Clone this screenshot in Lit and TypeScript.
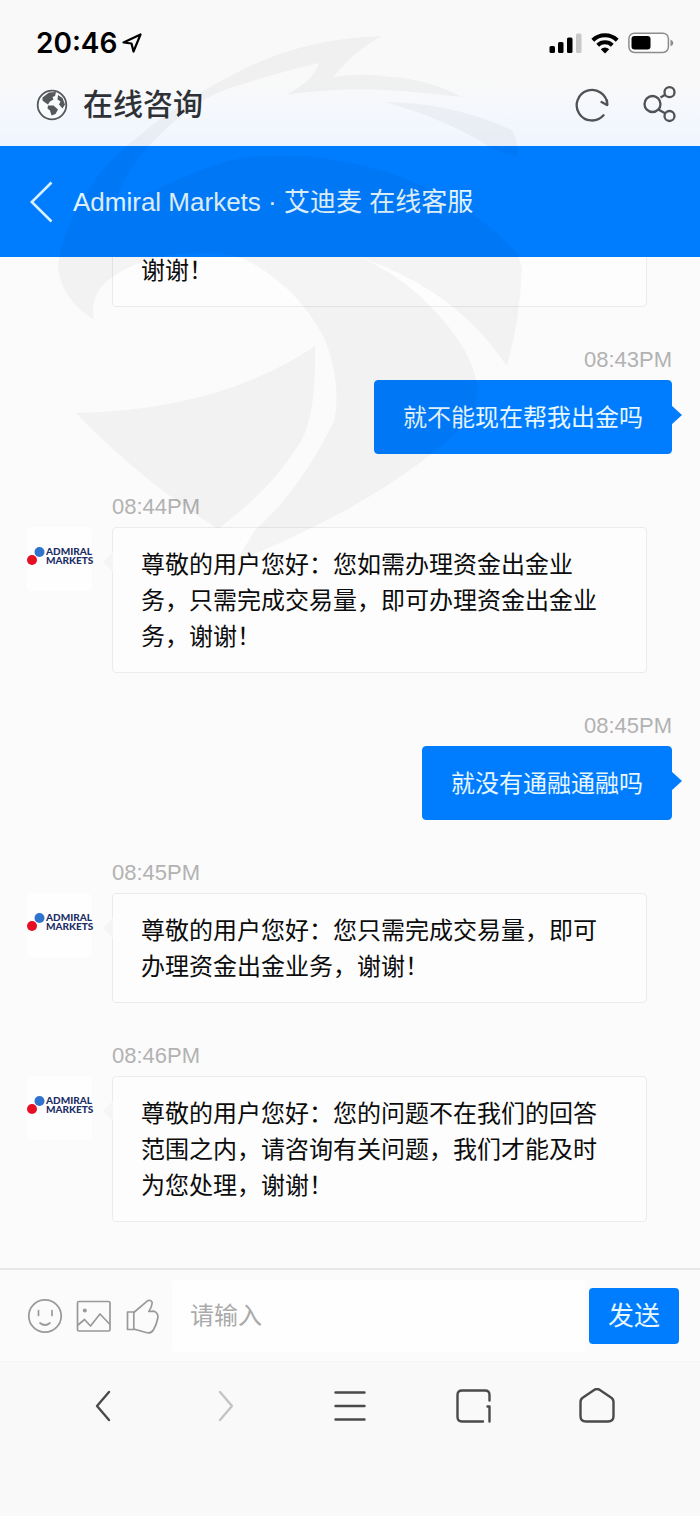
import { LitElement, html, css, svg } from "lit";
import { customElement, property } from "lit/decorators.js";

interface Message {
  from: "agent" | "me";
  time: string;
  text: string;
}

const MESSAGES: Message[] = [
  { from: "agent", time: "", text: "谢谢！" },
  { from: "me", time: "08:43PM", text: "就不能现在帮我出金吗" },
  {
    from: "agent",
    time: "08:44PM",
    text: "尊敬的用户您好：您如需办理资金出金业务，只需完成交易量，即可办理资金出金业务，谢谢！",
  },
  { from: "me", time: "08:45PM", text: "就没有通融通融吗" },
  {
    from: "agent",
    time: "08:45PM",
    text: "尊敬的用户您好：您只需完成交易量，即可办理资金出金业务，谢谢！",
  },
  {
    from: "agent",
    time: "08:46PM",
    text: "尊敬的用户您好：您的问题不在我们的回答范围之内，请咨询有关问题，我们才能及时为您处理，谢谢！",
  },
];

const icon = (w: number, h: number, body: unknown) =>
  html`<svg width=${w} height=${h} viewBox="0 0 ${w} ${h}" aria-hidden="true">${body}</svg>`;

const locationArrow = icon(22, 22, svg`
  <path d="M1.500 10.500 L18.500 2.500 L11.500 19.500 L9.500 11.500 Z" fill="none" stroke="#000" stroke-width="2.2" stroke-linejoin="round"/>`);

const signal = icon(33, 22, svg`
  <rect x="0.5" y="14" width="5.5" height="7" rx="1.5"/>
  <rect x="9" y="10" width="5.5" height="11" rx="1.5"/>
  <rect x="18" y="5.500" width="5.5" height="15.5" rx="1.5"/>
  <rect x="27" y="1.500" width="5.5" height="19.5" rx="1.5" fill="#c8c8c8"/>`);

const wifi = icon(28, 22, svg`
  <g fill="none" stroke="#000" stroke-width="4">
    <path d="M1.800 8.300 A17.500 17.500 0 0 1 26.200 8.300"/>
    <path d="M6.700 13.200 A10.600 10.600 0 0 1 21.300 13.200"/>
  </g>
  <path d="M14 21.500 L9.800 17.300 A6 6 0 0 1 18.200 17.300 Z"/>`);

const battery = icon(46, 22, svg`
  <rect x="0.9" y="1.2" width="39.5" height="19.3" rx="5.5" fill="#fdfdfd" stroke="#8c8c8c" stroke-width="1.5"/>
  <rect x="3.500" y="4" width="19" height="13.600" rx="3"/>
  <path d="M42.500 7.500 Q45.300 8.800 45.300 10.900 Q45.300 13 42.500 14.300 Z" fill="#8c8c8c"/>`);

const globe = icon(32, 32, svg`
  <circle cx="16" cy="16" r="14.3" fill="#fafbfd" stroke="#55585c" stroke-width="1.8"/>
  <g fill="#55585c">
    <path d="M6.500 8.500 L13 3.500 L20 3 L19 7 L16.500 8 L17.500 10.500 L14 12.500 L12 15.500 L9 13.500 L6.500 11.500 Z"/>
    <path d="M12 16.500 L17.500 16.500 L22 20.500 L19.500 25 L15.500 26.500 L14 21.500 L11.500 19.500 Z"/>
    <path d="M22 6 L26.500 9 L29 15.500 L26.500 19.500 L23 15.500 L24.500 12.500 L21.500 10.500 Z"/>
  </g>`);

const refresh = icon(34, 34, svg`
  <g fill="none" stroke="#505256" stroke-width="2.3" stroke-linecap="round" stroke-linejoin="round">
    <path d="M28.500 27.300 A15.300 15.300 0 1 1 32.300 16.700"/>
    <path d="M26.500 14 L32 17 V12.500"/>
  </g>`);

const share = icon(34, 38, svg`
  <g fill="none" stroke="#505256" stroke-width="2.3">
    <circle cx="9.500" cy="18" r="8"/>
    <circle cx="26.500" cy="6.200" r="5"/>
    <circle cx="26.500" cy="30" r="5"/>
    <path d="M17.500 11.500 L22.200 8.800 M15.300 23.500 L22.500 27.500"/>
  </g>`);

const chevron = icon(24, 42, svg`
  <path d="M21.500 1.500 L1.800 21 L21.500 40.500" fill="none" stroke="#d9f0ff" stroke-width="2.6"/>`);

const smile = icon(36, 36, svg`
  <g fill="none" stroke="#999" stroke-width="1.7" stroke-linecap="round">
    <circle cx="18" cy="18" r="16.200"/>
    <path d="M11.500 12.500 V17.500 M25 12.500 V17.500 M13 25 Q18 29 23 25"/>
  </g>`);

const picture = icon(36, 36, svg`
  <g fill="none" stroke="#999" stroke-width="1.7" stroke-linejoin="round">
    <rect x="1.500" y="3.500" width="32.500" height="29.500" rx="1.5"/>
    <path d="M2 27 L8.500 21.500 L14.500 28 L24 16 L34 26.500"/>
  </g>
  <circle cx="8.800" cy="12.500" r="2" fill="#999"/>`);

const thumb = icon(36, 36, svg`
  <g fill="none" stroke="#999" stroke-width="1.7" stroke-linejoin="round">
    <path d="M2.500 14 H8.800 V31.500 H2.500 Z"/>
    <path d="M8.800 14.500 L22.500 2.800 Q26 1.200 27.200 4.500 Q27 9 23.800 13.500 L29 13.200 Q33.500 15 32.800 20 Q31.500 27 28.300 32 Q26 36 21 34.500 L8.800 31"/>
  </g>`);

const navStroke = (d: string, color = "#4a4a4a") =>
  icon(36, 36, svg`<path d=${d} fill="none" stroke=${color} stroke-width="2.4" stroke-linecap="round" stroke-linejoin="round"/>`);

const navBack = navStroke("M24 4 L12 18 L24 32");
const navForward = navStroke("M12 4 L24 18 L12 32", "#c4c4c4");
const navMenu = navStroke("M3.500 4.500 H32.500 M3.500 18 H32.500 M3.500 31.500 H32.500");
const navTabs = navStroke("M33.500 12.500 V7 Q33.500 2.500 29 2.500 H6 Q1.500 2.500 1.500 7 V29 Q1.500 33.500 6 33.500 H27 M31.500 18.500 H33.500 V33.500");
const navHome = navStroke("M1.500 14 Q1.500 11 4 9.500 L15.500 1.800 Q18 0.200 20.500 1.800 L32 9.500 Q34.500 11 34.500 14 V28 Q34.500 33.500 29 33.500 H7 Q1.500 33.500 1.500 28 Z");

const FONT = css`
  font-family: "Liberation Sans", "Noto Sans CJK SC", sans-serif;
`;

@customElement("chat-message")
export class ChatMessage extends LitElement {
  @property({ attribute: false }) message!: Message;

  static styles = css`
    :host {
      display: block;
      ${FONT}
    }
    .row {
      display: grid;
      grid-template-columns: 66px minmax(0, 1fr);
      column-gap: 20px;
      padding: 0 53px 0 26px;
    }
    .row.me {
      padding-right: 28px;
      justify-items: end;
    }
    .time {
      grid-column: 2;
      margin: 40px 0 7px;
      font-size: 22px;
      line-height: 26px;
      color: #b2b2b2;
    }
    .avatar {
      grid-column: 1;
      display: flex;
      align-items: flex-start;
      width: 66px;
      height: 64px;
      box-sizing: border-box;
      padding-top: 20px;
      border-radius: 6px;
      background: #fefefe;
      color: #1b2e66;
      font: 900 10px/9px Lato, sans-serif;
    }
    .avatar svg {
      flex: none;
    }
    .bubble {
      grid-column: 2;
      position: relative;
      box-sizing: border-box;
      margin: 0;
      padding: 19px 28px 17px;
      border: 1px solid #ebebeb;
      border-radius: 4px;
      background: #fdfdfd;
      color: #0c0c0c;
      font-size: 24px;
      line-height: 36px;
    }
    .bubble.tail::before {
      content: "";
      position: absolute;
      top: 24px;
      right: 100%;
      border: solid transparent;
      border-width: 10px 10px 10px 0;
      border-right-color: #f5f5f5;
    }
    .me .bubble {
      border-color: #007dff;
      background: #007dff;
      color: #e6f7ff;
    }
    .me .bubble.tail::before {
      right: auto;
      left: 100%;
      border-width: 10px 0 10px 11px;
      border-left-color: #007dff;
    }
  `;

  render() {
    const { from, time, text } = this.message;
    return html`
      <div class="row ${from}">
        ${time ? html`<time class="time">${time}</time>` : ""}
        ${from === "agent" && time
          ? html`<div class="avatar">
              <svg width="20" height="20" viewBox="0 0 20 20" aria-hidden="true">
                <circle cx="13.500" cy="5" r="5" fill="#2f74cc" />
                <circle cx="6" cy="13" r="5" fill="#e60f23" />
              </svg>
              <span>ADMIRAL<br />MARKETS</span>
            </div>`
          : ""}
        <p class="bubble ${time ? "tail" : ""}">${text}</p>
      </div>
    `;
  }
}

@customElement("app-root")
export class AppRoot extends LitElement {
  static styles = css`
    :host {
      display: block;
      ${FONT}
    }
    .screen {
      position: relative;
      display: flex;
      flex-direction: column;
      height: 100vh;
      overflow: hidden;
      background: #fbfbfb;
    }
    svg {
      display: block;
      flex: none;
    }
    button {
      display: flex;
      align-items: center;
      justify-content: center;
      padding: 0;
      border: 0;
      background: none;
      font-family: inherit;
      cursor: pointer;
    }
    .top {
      padding: 28px 23px 22px 36px;
      background: linear-gradient(#f9f9f9 55%, #f5f8fc 75%, #f0f6ff);
    }
    .status,
    .clock,
    .phone,
    .titlebar,
    .actions,
    .tools {
      display: flex;
      align-items: center;
    }
    .status {
      justify-content: space-between;
      height: 30px;
      padding-right: 3px;
    }
    .clock {
      gap: 5px;
      color: #000;
      font: 600 28px/30px Inter, sans-serif;
    }
    .phone {
      gap: 9px;
    }
    .titlebar {
      justify-content: space-between;
      margin-top: 28px;
      height: 38px;
    }
    .site {
      display: flex;
      align-items: center;
      gap: 15px;
      margin: 0;
      color: #2e3135;
      font-size: 30px;
      font-weight: 500;
      line-height: 38px;
    }
    .actions {
      gap: 34px;
    }
    .header {
      display: flex;
      align-items: center;
      gap: 19px;
      flex: none;
      height: 111px;
      padding: 0 30px;
      background: #007dff;
    }
    .header h1 {
      margin: 0;
      color: #e2f5ff;
      font-size: 26px;
      font-weight: 400;
      line-height: 36px;
    }
    .chat {
      flex: 1;
      min-height: 0;
      display: flex;
      flex-direction: column-reverse;
      overflow-y: auto;
      scrollbar-width: none;
    }
    .log {
      padding-bottom: 46px;
    }
    .composer {
      display: flex;
      align-items: center;
      flex: none;
      gap: 11px;
      box-sizing: border-box;
      height: 93px;
      padding: 0 21px 0 27px;
      border-top: 2px solid #e9e9e9;
    }
    .tools {
      gap: 13px;
    }
    .field {
      flex: 1;
      min-width: 0;
      height: 72px;
      box-sizing: border-box;
      margin-right: -7px;
      padding: 0 18px;
      border: 0;
      outline: 0;
      border-radius: 4px;
      background: #fefefe;
      color: #111;
      font: inherit;
      font-size: 24px;
    }
    .field::placeholder {
      color: #aaa;
      opacity: 1;
    }
    .send {
      flex: none;
      width: 90px;
      height: 56px;
      border-radius: 4px;
      background: #007dff;
      color: #e6f7ff;
      font-size: 26px;
      line-height: 36px;
    }
    .browser {
      display: flex;
      flex: none;
      box-sizing: border-box;
      height: 155px;
      padding: 26px 41px 0;
      background: #f9f9f9;
      border-top: 1px solid #f5f5f5;
    }
    .browser button {
      flex: 1;
      height: 36px;
    }
    .watermark {
      position: absolute;
      top: 0;
      left: 0;
      pointer-events: none;
    }
  `;

  render() {
    return html`
      <div class="screen">
        <div class="top">
          <div class="status">
            <div class="clock"><span>20:46</span>${locationArrow}</div>
            <div class="phone">${signal}${wifi}${battery}</div>
          </div>
          <div class="titlebar">
            <div class="site">${globe}<span>在线咨询</span></div>
            <div class="actions">
              <button aria-label="刷新">${refresh}</button>
              <button aria-label="分享">${share}</button>
            </div>
          </div>
        </div>
        <header class="header">
          <button aria-label="返回">${chevron}</button>
          <h1>Admiral Markets · 艾迪麦 在线客服</h1>
        </header>
        <main class="chat">
          <div class="log">
            ${MESSAGES.map((m) => html`<chat-message .message=${m}></chat-message>`)}
          </div>
        </main>
        <form class="composer" @submit=${(e: Event) => e.preventDefault()}>
          <div class="tools">
            <button type="button" aria-label="表情">${smile}</button>
            <button type="button" aria-label="图片">${picture}</button>
            <button type="button" aria-label="点赞">${thumb}</button>
          </div>
          <input class="field" type="text" placeholder="请输入" aria-label="请输入" />
          <button class="send" type="submit">发送</button>
        </form>
        <nav class="browser">
          <button aria-label="后退">${navBack}</button>
          <button aria-label="前进">${navForward}</button>
          <button aria-label="菜单">${navMenu}</button>
          <button aria-label="标签页">${navTabs}</button>
          <button aria-label="主页">${navHome}</button>
        </nav>
        <svg class="watermark" width="540" height="570" viewBox="0 0 540 570" aria-hidden="true">
          <g fill="#000" fill-opacity="0.035">
            <path d="M382 36 Q310 38 250 66 Q180 100 140 135 Q104 163 92 185 Q60 230 58 268 Q62 300 94 320 Q90 296 107 281 Q140 256 185 254 Q225 250 250 262 Q300 290 325 340 Q342 385 334 421 Q300 490 255 530 L235 563 Q250 555 262 551 Q310 530 348 509 Q390 485 420 463 Q450 440 464 425 Q478 408 478 390 Q474 350 429 305 Q400 275 362 258 Q440 285 487 340 L507 366 Q520 320 522 268 L518 254 Q470 200 390 173 Q310 148 240 158 Q180 172 112 215 Q120 178 150 145 Q196 96 237 86 Q280 72 319 63 Q314 80 286 95 Q345 86 402 91 L462 97 Q430 80 393 77 Q360 72 333 77 Q355 50 382 36 Z"/>
            <path d="M315 346 Q220 410 76 413 Q140 480 218 529 Q270 490 295 450 Q317 425 315 346 Z"/>
            <path d="M384 102 Q450 102 512 130 Q518 140 518 157 L494 150 Q450 120 384 102 Z"/>
          </g>
        </svg>
      </div>
    `;
  }
}
